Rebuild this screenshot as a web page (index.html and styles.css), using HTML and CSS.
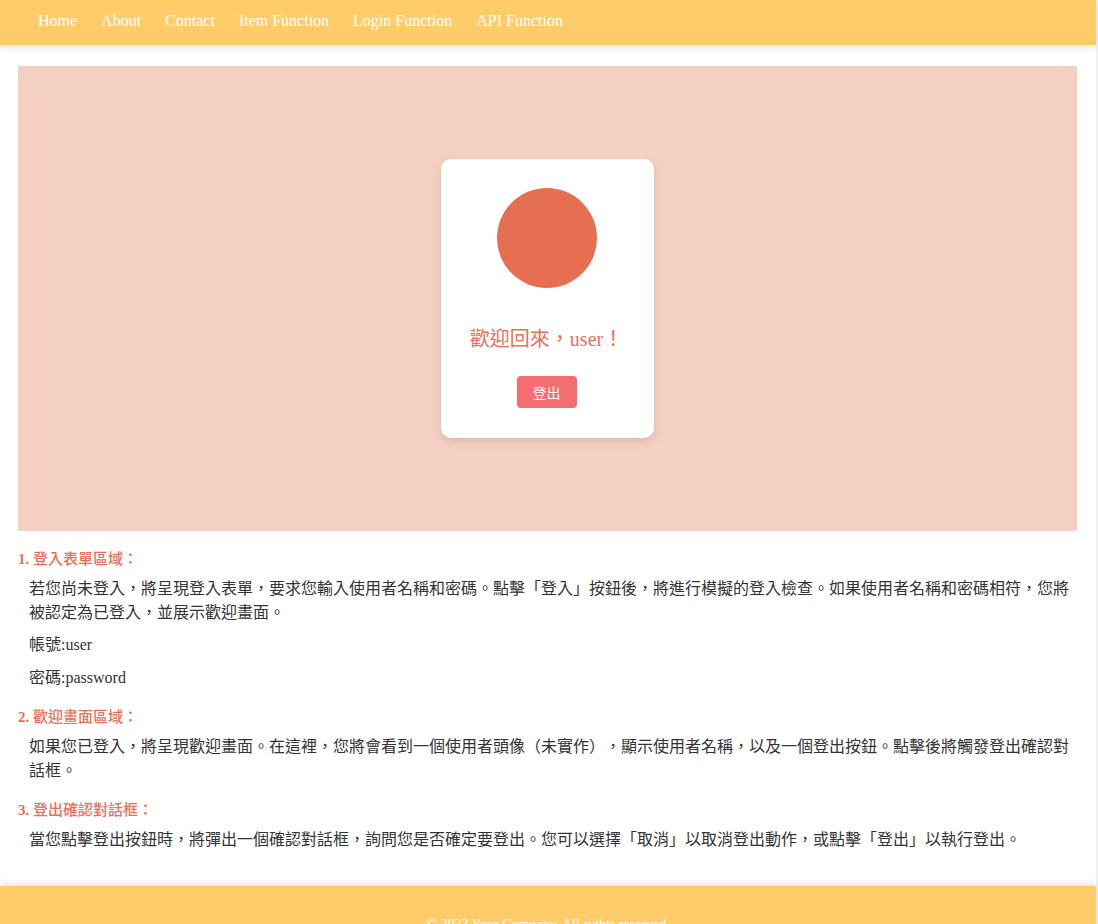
FILE: index.html
```html
<!DOCTYPE html>
<html lang="zh-Hant">
<head>
<meta charset="utf-8">
<title>Login Function</title>
<link rel="stylesheet" href="styles.css">
</head>
<body>
<div class="page">
  <header class="topbar">
    <nav class="nav">
      <a href="#">Home</a>
      <a href="#">About</a>
      <a href="#">Contact</a>
      <a href="#">Item Function</a>
      <a href="#">Login Function</a>
      <a href="#">API Function</a>
    </nav>
  </header>
  <main class="main">
    <section class="hero">
      <div class="card">
        <div class="avatar"></div>
        <h2 class="welcome">歡迎回來，user！</h2>
        <button class="btn">登出</button>
      </div>
    </section>
    <section class="info">
      <h3 class="info-title"><span class="num">1.</span> 登入表單區域：</h3>
      <p class="info-text first">若您尚未登入，將呈現登入表單，要求您輸入使用者名稱和密碼。點擊「登入」按鈕後，將進行模擬的登入檢查。如果使用者名稱和密碼相符，您將被認定為已登入，並展示歡迎畫面。</p>
      <p class="info-text">帳號:user</p>
      <p class="info-text">密碼:password</p>
    </section>
    <section class="info">
      <h3 class="info-title"><span class="num">2.</span> 歡迎畫面區域：</h3>
      <p class="info-text first">如果您已登入，將呈現歡迎畫面。在這裡，您將會看到一個使用者頭像（未實作），顯示使用者名稱，以及一個登出按鈕。點擊後將觸發登出確認對話框。</p>
    </section>
    <section class="info">
      <h3 class="info-title"><span class="num">3.</span> 登出確認對話框：</h3>
      <p class="info-text first">當您點擊登出按鈕時，將彈出一個確認對話框，詢問您是否確定要登出。您可以選擇「取消」以取消登出動作，或點擊「登出」以執行登出。</p>
    </section>
  </main>
  <footer class="footer">© 2023 Your Company. All rights reserved.</footer>
</div>
</body>
</html>
```

FILE: styles.css
```css
html {
  background: #f0f0f0;
}
body {
  margin: 0;
  font-family: "Liberation Serif", "Noto Sans CJK TC", serif;
  color: #333;
  text-spacing-trim: space-all;
}
.page {
  width: 1096px;
  background: #fff;
}
.topbar {
  height: 45px;
  background: #ffcc69;
  box-shadow: 0 2px 8px rgba(0, 0, 0, 0.12);
  display: flex;
  align-items: center;
  position: relative;
  z-index: 1;
}
.nav {
  display: flex;
  padding-left: 26px;
}
.nav a {
  color: #fff;
  text-decoration: none;
  font-size: 16px;
  padding: 0 12px;
  line-height: 20px;
  margin-top: -3px;
}
.main {
  padding: 21px 19px 34px 18px;
}
.hero {
  height: 465px;
  background: #f4d0c2;
  display: flex;
  align-items: center;
  justify-content: center;
}
.card {
  background: #fff;
  border-radius: 10px;
  padding: 29px 31px 30px 29px;
  box-shadow: 0 4px 10px rgba(0, 0, 0, 0.1);
  display: flex;
  flex-direction: column;
  align-items: center;
  width: 153px;
}
.avatar {
  width: 100px;
  height: 100px;
  border-radius: 50%;
  background: #e76f51;
}
.welcome {
  margin: 39px 0 0;
  font-size: 20px;
  font-weight: normal;
  line-height: 24px;
  color: #e8705a;
  white-space: nowrap;
}
.btn {
  margin-top: 25px;
  width: 60px;
  height: 32px;
  border: none;
  border-radius: 4px;
  background: #f46d6f;
  color: #fff;
  font-family: "Noto Sans CJK TC", sans-serif;
  font-size: 14px;
  padding: 0;
}
.info {
  margin-top: 17px;
}
.info-title {
  margin: 0;
  font-size: 15px;
  line-height: 22px;
  font-weight: 500;
  color: #e8705a;
}
.info-title .num {
  font-weight: bold;
}
.info-text {
  margin: 9px 0 0;
  padding-left: 11px;
  font-size: 16px;
  line-height: 23.5px;
  color: #333;
}
.info-text.first {
  margin-top: 7px;
}
.footer {
  background: #ffcc69;
  color: #fff;
  text-align: center;
  font-size: 14px;
  line-height: 18px;
  padding: 30px 0 28px;
  box-shadow: 0 -2px 8px rgba(0, 0, 0, 0.12);
  position: relative;
}
```
